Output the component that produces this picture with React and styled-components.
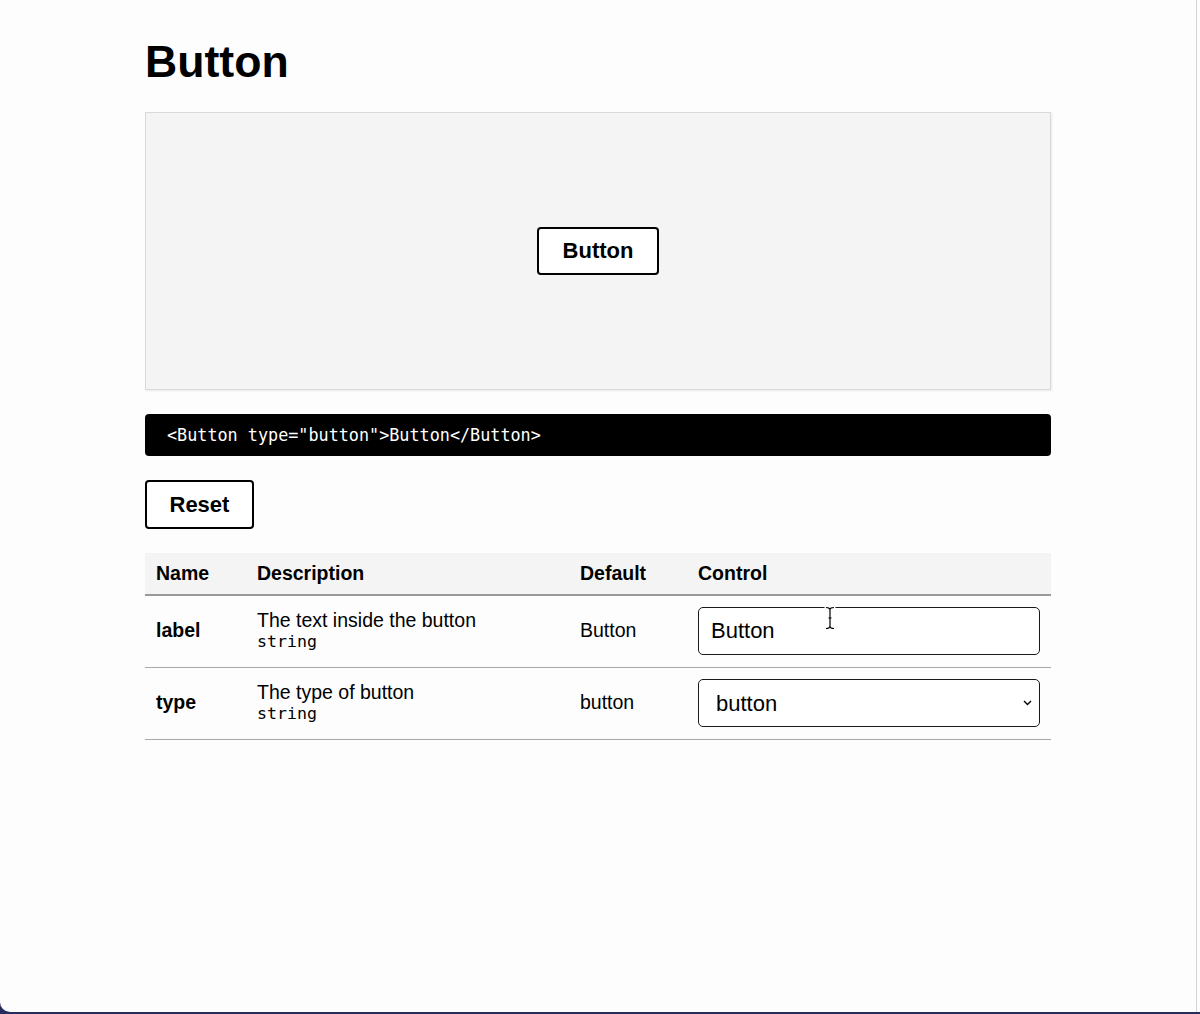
import React, { useState } from "react";
import styled, { createGlobalStyle } from "styled-components";

const Global = createGlobalStyle`
  html, body { margin: 0; padding: 0; background: #262c5c; }
  body { font-family: "Liberation Sans", Arial, sans-serif; color: #000; }
  * { box-sizing: border-box; }
`;

const Window = styled.div`
  min-height: 1012px;
  background: #fdfdfd;
  border-bottom-left-radius: 10px;
  box-shadow: inset -3px 0 0 #fdfdfd, inset -4px 0 0 #d4d4d4;
  padding-top: 37px;
`;

const Content = styled.main`
  width: 906px;
  margin-left: 145px;
  display: flex;
  flex-direction: column;
  align-items: flex-start;
`;

const Title = styled.h1`
  margin: 0 0 25px;
  font-size: 44.6px;
  font-weight: 700;
  line-height: normal;
`;

const Preview = styled.section`
  width: 100%;
  height: 278px;
  background: #f4f4f4;
  border: 1px solid #d9d9d9;
  box-shadow: 1px 1px 2px rgba(0, 0, 0, 0.08);
  display: flex;
  align-items: center;
  justify-content: center;
  margin-bottom: 24px;
`;

const Btn = styled.button`
  height: ${(p) => p.$h || 48}px;
  padding: 0 ${(p) => p.$px || 23}px;
  background: #fff;
  border: 2px solid #000;
  border-radius: 4px;
  font-family: "Liberation Sans", Arial, sans-serif;
  font-size: 22px;
  font-weight: 700;
  color: #000;
  cursor: pointer;
`;

const Code = styled.pre`
  width: 100%;
  height: 42px;
  margin: 0 0 24px;
  padding: 0 22px;
  background: #000;
  color: #fff;
  border-radius: 4px;
  display: flex;
  align-items: center;
  font-family: "DejaVu Sans Mono", monospace;
  font-size: 16.8px;
`;

const Table = styled.table`
  width: 100%;
  margin-top: 24px;
  border-collapse: collapse;
  table-layout: fixed;
  font-size: 19.5px;
`;

const Th = styled.th`
  background: #f4f4f4;
  height: 42px;
  padding: 0 11px;
  text-align: left;
  font-weight: 700;
  border-bottom: 2px solid #9a9a9a;
`;

const Tr = styled.tr`
  border-bottom: 1px solid #a8a8a8;
`;

const Td = styled.td`
  padding: 11px 11px 12px;
  vertical-align: middle;
  font-weight: ${(p) => (p.$bold ? 700 : 400)};
  line-height: 1.1;
`;

const TypeName = styled.code`
  display: block;
  font-family: "DejaVu Sans Mono", monospace;
  font-size: 16.6px;
  line-height: 1.2;
`;

const Field = styled.div`
  position: relative;
  width: 100%;
`;

const TextInput = styled.input`
  width: 100%;
  height: 48px;
  padding: 0 12px;
  border: 1px solid #1a1a1a;
  border-radius: 5px;
  background: #fff;
  font-family: "Liberation Sans", Arial, sans-serif;
  font-size: 22px;
  color: #000;
  outline: none;
`;

const Select = styled.select`
  width: 100%;
  height: 48px;
  padding: 0 30px 0 17px;
  border: 1px solid #1a1a1a;
  border-radius: 5px;
  background: #fff;
  font-family: "Liberation Sans", Arial, sans-serif;
  font-size: 22px;
  color: #000;
  appearance: none;
  -webkit-appearance: none;
  outline: none;
`;

const Chevron = styled.svg`
  position: absolute;
  right: 8px;
  top: 50%;
  transform: translateY(-50%);
  pointer-events: none;
`;

const Cursor = styled.svg`
  position: absolute;
  left: 126px;
  top: -2px;
  pointer-events: none;
`;

export default function App() {
  const [label, setLabel] = useState("Button");
  const [type, setType] = useState("button");
  return (
    <>
      <Global />
      <Window>
        <Content>
          <Title>Button</Title>
          <Preview>
            <Btn type={type} $px={23.5}>{label}</Btn>
          </Preview>
          <Code>{`<Button type="${type}">${label}</Button>`}</Code>
          <Btn $h={49} $px={22.5} onClick={() => { setLabel("Button"); setType("button"); }}>
            Reset
          </Btn>
          <Table>
            <colgroup>
              <col style={{ width: "101px" }} />
              <col style={{ width: "323px" }} />
              <col style={{ width: "118px" }} />
              <col />
            </colgroup>
            <thead>
              <tr>
                <Th>Name</Th>
                <Th>Description</Th>
                <Th>Default</Th>
                <Th>Control</Th>
              </tr>
            </thead>
            <tbody>
              <Tr>
                <Td $bold>label</Td>
                <Td>
                  The text inside the button
                  <TypeName>string</TypeName>
                </Td>
                <Td>Button</Td>
                <Td>
                  <Field>
                    <TextInput value={label} onChange={(e) => setLabel(e.target.value)} />
                    <Cursor width="12" height="26" viewBox="0 0 12 26">
                      <path
                        d="M2 2.5 Q6 2.5 6 5 Q6 2.5 10 2.5 M6 5 V21 M2 23.5 Q6 23.5 6 21 Q6 23.5 10 23.5 M4 13 H8"
                        fill="none"
                        stroke="#fff"
                        strokeWidth="3"
                        strokeLinecap="round"
                      />
                      <path
                        d="M2 2.5 Q6 2.5 6 5 Q6 2.5 10 2.5 M6 5 V21 M2 23.5 Q6 23.5 6 21 Q6 23.5 10 23.5 M4.5 13 H7.5"
                        fill="none"
                        stroke="#000"
                        strokeWidth="1.2"
                      />
                    </Cursor>
                  </Field>
                </Td>
              </Tr>
              <Tr>
                <Td $bold>type</Td>
                <Td>
                  The type of button
                  <TypeName>string</TypeName>
                </Td>
                <Td>button</Td>
                <Td>
                  <Field>
                    <Select value={type} onChange={(e) => setType(e.target.value)}>
                      <option value="button">button</option>
                      <option value="submit">submit</option>
                      <option value="reset">reset</option>
                    </Select>
                    <Chevron width="9" height="6" viewBox="0 0 9 6">
                      <path d="M1 1 L4.5 4.5 L8 1" fill="none" stroke="#000" strokeWidth="1.4" />
                    </Chevron>
                  </Field>
                </Td>
              </Tr>
            </tbody>
          </Table>
        </Content>
      </Window>
    </>
  );
}
